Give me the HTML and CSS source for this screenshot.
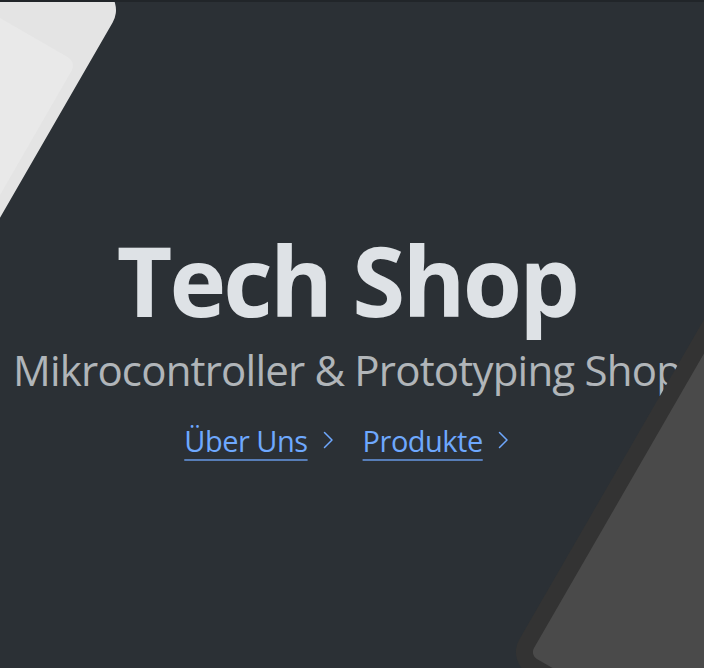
FILE: index.html
```html
<!DOCTYPE html>
<html lang="de">
<head>
<meta charset="utf-8">
<title>Tech Shop</title>
<link rel="stylesheet" href="styles.css">
</head>
<body>
<main class="hero">
  <h1 class="hero-title">Tech Shop</h1>
  <p class="hero-lead">Mikrocontroller &amp; Prototyping Shop</p>
  <div class="hero-links">
    <a class="icon-link" href="#">Über Uns<svg viewBox="0 0 12 18" class="chev" aria-hidden="true"><path d="M1.5 1.5 L9 9 L1.5 16.5" fill="none" stroke="currentColor" stroke-width="1.5" stroke-linecap="round" stroke-linejoin="round"/></svg></a>
    <a class="icon-link" href="#">Produkte<svg viewBox="0 0 12 18" class="chev" aria-hidden="true"><path d="M1.5 1.5 L9 9 L1.5 16.5" fill="none" stroke="currentColor" stroke-width="1.5" stroke-linecap="round" stroke-linejoin="round"/></svg></a>
  </div>
</main>
<svg class="deco" viewBox="0 0 704 668" aria-hidden="true">
  <g transform="translate(125.15 0.95) rotate(30)">
    <rect x="-600" y="0" width="600" height="900" rx="25" fill="#e4e4e4"/>
  </g>
  <g transform="translate(76.6 62.2) rotate(30)">
    <rect x="-600" y="0" width="600" height="900" rx="10" fill="#e9e9e9"/>
  </g>
  <g transform="translate(530 655) rotate(30)">
    <rect x="-17" y="-817" width="634" height="834" rx="25" fill="#333333"/>
    <rect x="0" y="-800" width="600" height="800" rx="8" fill="#4a4a4a"/>
  </g>
</svg>
</body>
</html>
```
FILE: styles.css
```css
html, body {
  margin: 0;
  padding: 0;
  height: 100%;
}
body {
  background: #2b3035;
  border-top: 2px solid #212529;
  box-sizing: border-box;
  overflow: hidden;
  font-family: "Open Sans", "Noto Sans", sans-serif;
  color: #dee2e6;
  position: relative;
}
.hero {
  display: flex;
  flex-direction: column;
  align-items: center;
  padding-top: 220px;
  padding-right: 10px;
  text-align: center;
}
.hero-title {
  margin: 0;
  font-size: 96px;
  font-weight: 700;
  line-height: 1.2;
  color: #dee2e6;
  letter-spacing: -2.8px;
}
.hero-lead {
  margin: 8px 0 0;
  font-size: 42px;
  font-weight: 400;
  line-height: 1.2;
  color: rgba(222, 226, 230, 0.75);
  white-space: nowrap;
  letter-spacing: -0.8px;
}
.hero-links {
  display: flex;
  gap: 28px;
  margin-top: 28px;
}
.icon-link {
  display: inline-flex;
  align-items: center;
  gap: 15px;
  font-size: 29px;
  line-height: 1.2;
  letter-spacing: -0.5px;
  color: #6ea8fe;
  text-decoration: underline;
  text-decoration-color: rgba(110, 168, 254, 0.65);
  text-underline-offset: 7px;
  text-decoration-thickness: 2px;
}
.chev {
  width: 12px;
  height: 18px;
  margin-top: -2px;
}
.deco {
  position: absolute;
  top: -2px;
  left: 0;
  width: 704px;
  height: 668px;
  pointer-events: none;
}
```
